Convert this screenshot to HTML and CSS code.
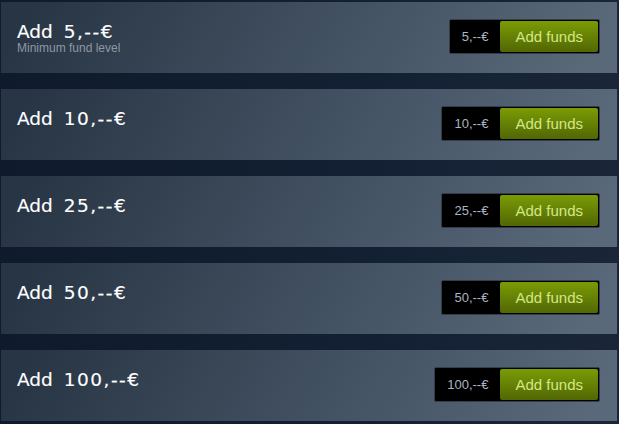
FILE: index.html
```html
<!DOCTYPE html>
<html>
<head>
<meta charset="utf-8">
<link rel="stylesheet" href="styles.css">
</head>
<body>
<div class="list">
  <div class="row">
    <div class="info">
      <div class="title">Add <span class="amt">5,--€</span></div>
      <div class="sub">Minimum fund level</div>
    </div>
    <div class="action">
      <div class="price">5,--€</div>
      <a class="btn">Add funds</a>
    </div>
  </div>
  <div class="row">
    <div class="info">
      <div class="title">Add <span class="amt">10,--€</span></div>
    </div>
    <div class="action">
      <div class="price">10,--€</div>
      <a class="btn">Add funds</a>
    </div>
  </div>
  <div class="row">
    <div class="info">
      <div class="title">Add <span class="amt">25,--€</span></div>
    </div>
    <div class="action">
      <div class="price">25,--€</div>
      <a class="btn">Add funds</a>
    </div>
  </div>
  <div class="row">
    <div class="info">
      <div class="title">Add <span class="amt">50,--€</span></div>
    </div>
    <div class="action">
      <div class="price">50,--€</div>
      <a class="btn">Add funds</a>
    </div>
  </div>
  <div class="row">
    <div class="info">
      <div class="title">Add <span class="amt">100,--€</span></div>
    </div>
    <div class="action">
      <div class="price">100,--€</div>
      <a class="btn">Add funds</a>
    </div>
  </div>
</div>
</body>
</html>
```
FILE: styles.css
```css
html, body {
  margin: 0;
  padding: 0;
}
body {
  width: 619px;
  height: 424px;
  overflow: hidden;
  background: linear-gradient(90deg, #0f1b2c 0%, #132033 60%, #1a2638 100%);
  font-family: "Liberation Sans", Arial, sans-serif;
}
.list {
  padding: 2px 2px 0 1px;
  display: flex;
  flex-direction: column;
  gap: 16px;
}
.row {
  height: 71px;
  box-sizing: border-box;
  padding: 17px 17px 0 16px;
  display: flex;
  justify-content: space-between;
  align-items: flex-start;
  background: linear-gradient(-60deg, #59697a 5%, #283545 95%);
}
.info {
  padding-top: 2px;
}
.title {
  font-family: "DejaVu Sans", sans-serif;
  font-size: 18.5px;
  line-height: 21px;
  word-spacing: 5px;
  color: #ffffff;
  -webkit-text-stroke: 0.15px #ffffff;
}
.amt {
  letter-spacing: 1.5px;
}
.sub {
  font-size: 12px;
  line-height: 12px;
  color: #8f98a0;
}
.action {
  display: flex;
  align-items: stretch;
  background: #000;
  border: 1px solid #343e4b;
  border-radius: 2px;
  padding: 1px 1px 1px 0;
  box-sizing: border-box;
  height: 35px;
}
.price {
  padding: 0 12px;
  font-size: 13px;
  line-height: 31px;
  color: #a9b5c0;
}
.btn {
  display: block;
  padding: 0 15px;
  font-size: 15px;
  line-height: 31px;
  color: #d2e885;
  border-radius: 2px;
  background: linear-gradient(to bottom, #799905 5%, #536904 95%);
}
```
